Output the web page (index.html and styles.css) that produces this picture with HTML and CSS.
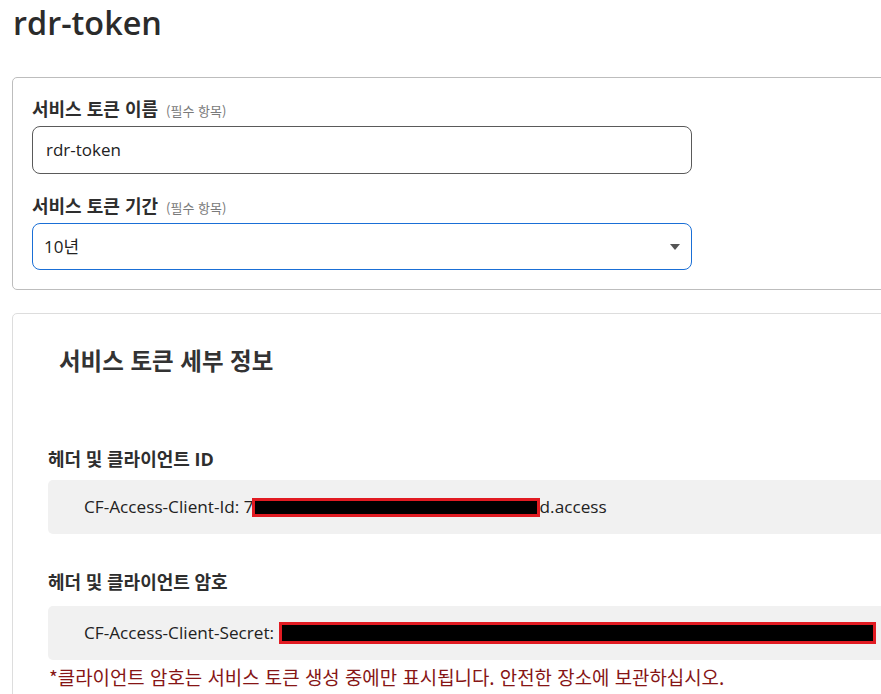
FILE: index.html
```html
<!DOCTYPE html>
<html lang="ko">
<head>
<meta charset="utf-8">
<title>rdr-token</title>
<link rel="stylesheet" href="styles.css">
</head>
<body>
<div class="page">
  <h1 class="title">rdr-token</h1>

  <section class="card card-form">
    <div class="field">
      <label class="label">서비스 토큰 이름 <span class="req">(필수 항목)</span></label>
      <div class="input">rdr-token</div>
    </div>
    <div class="field field-second">
      <label class="label">서비스 토큰 기간 <span class="req">(필수 항목)</span></label>
      <div class="input select">10년<span class="caret"></span></div>
    </div>
  </section>

  <section class="card card-details">
    <h2 class="details-title">서비스 토큰 세부 정보</h2>

    <h3 class="sub-title first">헤더 및 클라이언트 ID</h3>
    <div class="code-box box-id">CF-Access-Client-Id: 7<span class="redact redact-id"></span>d.access</div>

    <h3 class="sub-title">헤더 및 클라이언트 암호</h3>
    <div class="code-box box-secret">CF-Access-Client-Secret: <span class="redact redact-secret"></span></div>
    <p class="note">*클라이언트 암호는 서비스 토큰 생성 중에만 표시됩니다. 안전한 장소에 보관하십시오.</p>
  </section>
</div>
</body>
</html>
```
FILE: styles.css
```css
html, body {
  margin: 0;
  padding: 0;
  background: #ffffff;
  overflow: hidden;
}

body {
  font-family: "Open Sans", "Noto Sans CJK KR", sans-serif;
  color: #333333;
  width: 881px;
  height: 694px;
}

.page {
  padding-left: 12px;
  width: 869px;
  height: 694px;
  overflow: hidden;
}

.title {
  margin: 0;
  padding-left: 1px;
  font-size: 32.4px;
  line-height: 44px;
  font-weight: 600;
  color: #2b2b2b;
  height: 42px;
}

.card {
  box-sizing: border-box;
  width: 960px;
  border: 1px solid #bdbdbd;
  border-radius: 5px;
  background: #fff;
}

.card-form {
  margin-top: 35px;
  padding: 18px 0 18px 19px;
  height: 213px;
}

.field-second {
  margin-top: 19px;
}

.label {
  display: block;
  font-family: "Noto Sans CJK KR", sans-serif;
  font-size: 18px;
  line-height: 24px;
  font-weight: 700;
  color: #2e2e2e;
  height: 24px;
  white-space: nowrap;
}

.req {
  font-size: 13px;
  font-weight: 400;
  color: #7a7a7a;
  margin-left: 3px;
}

.input {
  box-sizing: border-box;
  position: relative;
  margin-top: 6px;
  width: 660px;
  height: 48px;
  border: 1px solid #5a5a5a;
  border-radius: 8px;
  padding-left: 13px;
  font-family: "Open Sans", "Noto Sans CJK KR", sans-serif;
  font-size: 17px;
  line-height: 46px;
  color: #222;
}

.select {
  border-color: #1a6fd6;
  height: 47px;
  line-height: 45px;
  padding-left: 11px;
}

.caret {
  position: absolute;
  right: 11px;
  top: 20px;
  width: 0;
  height: 0;
  border-left: 5px solid transparent;
  border-right: 5px solid transparent;
  border-top: 6px solid #555;
}

.card-details {
  margin-top: 23px;
  border-color: #dddddd;
  height: 400px;
  padding-left: 35px;
  padding-top: 1px;
}

.details-title {
  margin: 30px 0 0 11px;
  font-family: "Noto Sans CJK KR", sans-serif;
  font-size: 23.5px;
  line-height: 30px;
  font-weight: 700;
  color: #333;
  white-space: nowrap;
}

.sub-title {
  margin: 0;
  font-family: "Open Sans", "Noto Sans CJK KR", sans-serif;
  font-size: 18px;
  line-height: 24px;
  font-weight: 700;
  color: #2e2e2e;
  margin-top: 36px;
  white-space: nowrap;
}

.sub-title.first {
  margin-top: 72px;
}

.code-box {
  box-sizing: border-box;
  height: 54px;
  background: #f1f1f1;
  border-radius: 5px;
  padding-left: 36px;
  font-family: "Open Sans", sans-serif;
  font-size: 17.2px;
  line-height: 54px;
  color: #222;
  white-space: nowrap;
}

.box-id {
  margin-top: 9px;
}

.box-secret {
  margin-top: 12px;
}

.redact {
  display: inline-block;
  box-sizing: border-box;
  vertical-align: middle;
  background: #000;
  border: 3px solid #e11b22;
  position: relative;
  top: -1px;
}

.redact-id {
  width: 288px;
  height: 19px;
  margin-left: -2px;
}

.redact-secret {
  width: 597px;
  height: 22px;
}

.note {
  margin: 4px 0 0 1px;
  font-family: "Noto Sans CJK KR", sans-serif;
  font-size: 18.9px;
  line-height: 26px;
  color: #861515;
  white-space: nowrap;
}
```
